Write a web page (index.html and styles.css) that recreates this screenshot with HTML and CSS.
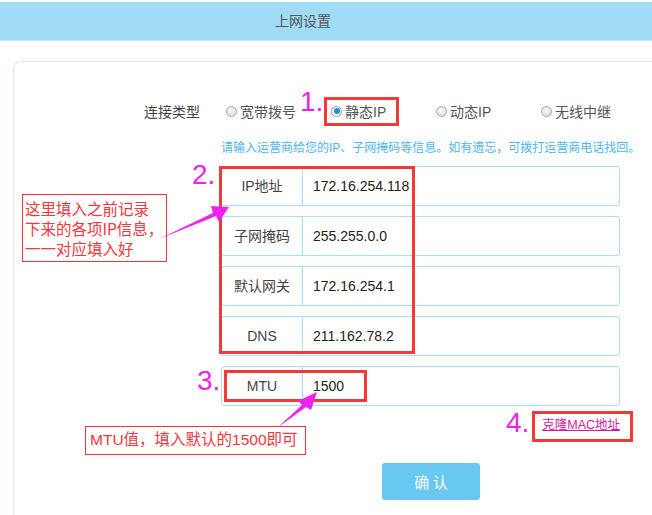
FILE: index.html
```html
<!DOCTYPE html>
<html lang="zh">
<head>
<meta charset="utf-8">
<title>上网设置</title>
<link rel="stylesheet" href="styles.css">
</head>
<body>
<div class="header">上网设置</div>
<div class="card">
  <div class="type-row">
    <div class="type-label">连接类型</div>
    <div class="radios">
      <label class="opt"><span class="radio"></span>宽带拨号</label>
      <label class="opt"><span class="radio checked"></span>静态IP</label>
      <label class="opt"><span class="radio"></span>动态IP</label>
      <label class="opt"><span class="radio"></span>无线中继</label>
    </div>
  </div>
  <div class="content">
    <div class="hint">请输入运营商给您的IP、子网掩码等信息。如有遗忘，可拨打运营商电话找回。</div>
    <div class="field"><div class="flabel">IP地址</div><div class="fvalue">172.16.254.118</div></div>
    <div class="field"><div class="flabel">子网掩码</div><div class="fvalue">255.255.0.0</div></div>
    <div class="field"><div class="flabel">默认网关</div><div class="fvalue">172.16.254.1</div></div>
    <div class="field"><div class="flabel">DNS</div><div class="fvalue">211.162.78.2</div></div>
    <div class="field"><div class="flabel">MTU</div><div class="fvalue">1500</div></div>
    <div class="link-row"><a class="mac-link" href="#">克隆MAC地址</a></div>
    <button class="confirm">确 认</button>
  </div>
</div>

<div class="num n1">1.</div>
<div class="num n2">2.</div>
<div class="num n3">3.</div>
<div class="num n4">4.</div>
<div class="redbox rb-static"></div>
<div class="redbox rb-rows"></div>
<div class="redbox rb-mtu"></div>
<div class="redbox rb-link"></div>
<div class="note note1">这里填入之前记录<br>下来的各项IP信息，<br>一一对应填入好</div>
<div class="note note2">MTU值，填入默认的1500即可</div>
<svg class="arrows" width="652" height="515" viewBox="0 0 652 515">
  <polygon points="159,239 213,213 211,206 229,207 219,222 216,216" fill="#ee22ee"/>
  <polygon points="277,428 302,405 298,401 317,392 311,410 306,407" fill="#ee22ee"/>
</svg>
</body>
</html>
```
FILE: styles.css
```css
html, body {
  margin: 0;
  padding: 0;
}
body {
  position: relative;
  width: 652px;
  height: 515px;
  overflow: hidden;
  background: #fff;
  font-family: "Liberation Sans", "Noto Sans CJK SC", sans-serif;
  color: #333;
}
.header {
  margin-top: 2px;
  height: 38px;
  line-height: 38px;
  background: #a1dcf7;
  border-bottom: 1px solid #c9e9f7;
  text-align: center;
  padding-right: 46px;
  font-size: 14px;
  color: #555;
}
.card {
  margin: 20px 0 0 13px;
  width: 639px;
  height: 454px;
  box-sizing: border-box;
  border: 1px solid #dde8ef;
  border-right: none;
  border-bottom: none;
  border-radius: 8px 0 0 0;
  padding-top: 39px;
}
.type-row {
  display: flex;
  align-items: center;
  height: 20px;
}
.type-label {
  width: 186px;
  text-align: right;
  font-size: 14px;
  color: #444;
  margin-right: 21px;
}
.radios {
  display: flex;
}
.opt {
  width: 105px;
  box-sizing: border-box;
  padding-left: 5px;
  display: flex;
  align-items: center;
  font-size: 14px;
  color: #555;
}
.radio {
  width: 11px;
  height: 11px;
  border-radius: 50%;
  border: 1px solid #a8a8a8;
  background: radial-gradient(circle at 45% 40%, #fafafa 0, #e6e6e6 55%, #c8c8c8 100%);
  margin-right: 3px;
  position: relative;
  box-sizing: border-box;
}
.radio.checked {
  background: #fff;
  border-color: #9a9a9a;
}
.radio.checked::after {
  content: "";
  position: absolute;
  left: 1.5px;
  top: 1.5px;
  width: 6px;
  height: 6px;
  border-radius: 50%;
  background: #1b8fe3;
}
.content {
  margin-left: 207px;
  width: 399px;
}
.hint {
  margin-top: 19px;
  height: 16px;
  line-height: 16px;
  font-size: 12px;
  color: #4db6ec;
  white-space: nowrap;
}
.field {
  margin-top: 10px;
  height: 40px;
  box-sizing: border-box;
  border: 1px solid #a9ddf6;
  border-radius: 3px;
  display: flex;
}
.flabel {
  width: 80px;
  border-right: 1px solid #a9ddf6;
  text-align: center;
  line-height: 38px;
  font-size: 14px;
  color: #444;
}
.fvalue {
  padding-left: 10px;
  line-height: 38px;
  font-size: 14px;
  color: #222;
}
.link-row {
  margin-top: 10px;
  height: 16px;
  line-height: 16px;
  text-align: right;
}
.mac-link {
  font-size: 12.5px;
  color: #d01a9a;
  text-decoration: underline;
}
.confirm {
  display: block;
  margin: 31px 0 0 161px;
  width: 98px;
  height: 37px;
  border: none;
  border-radius: 3px;
  background: #68c8f2;
  color: #fff;
  font-family: "Noto Sans CJK SC", sans-serif;
  font-size: 15px;
  padding: 0;
}
.num {
  position: absolute;
  font-family: "Liberation Sans", sans-serif;
  font-size: 28px;
  line-height: 28px;
  color: #ee22ee;
}
.n1 { left: 300px; top: 88px; }
.n2 { left: 192px; top: 161px; }
.n3 { left: 197px; top: 367px; }
.n4 { left: 506px; top: 409px; }
.redbox {
  position: absolute;
  border: 3px solid #f23a3a;
  box-sizing: border-box;
}
.rb-static { left: 324px; top: 97px; width: 75px; height: 29px; }
.rb-rows { left: 219px; top: 166px; width: 196px; height: 188px; }
.rb-mtu { left: 224px; top: 370px; width: 143px; height: 32px; }
.rb-link { left: 532px; top: 411px; width: 101px; height: 31px; }
.note {
  position: absolute;
  background: #fff;
  border: 1px solid #e8383d;
  color: #f2363c;
  font-family: "Noto Sans CJK SC", sans-serif;
  font-size: 15.5px;
  line-height: 20px;
  box-sizing: border-box;
}
.note1 { left: 22px; top: 194px; width: 145px; height: 68px; padding: 3px 0 0 2px; }
.note2 { left: 85px; top: 426px; width: 221px; height: 29px; padding: 3px 0 0 4px; white-space: nowrap; font-family: "Liberation Sans", "Noto Sans CJK SC", sans-serif; }
.arrows {
  position: absolute;
  left: 0;
  top: 0;
  pointer-events: none;
}
```
